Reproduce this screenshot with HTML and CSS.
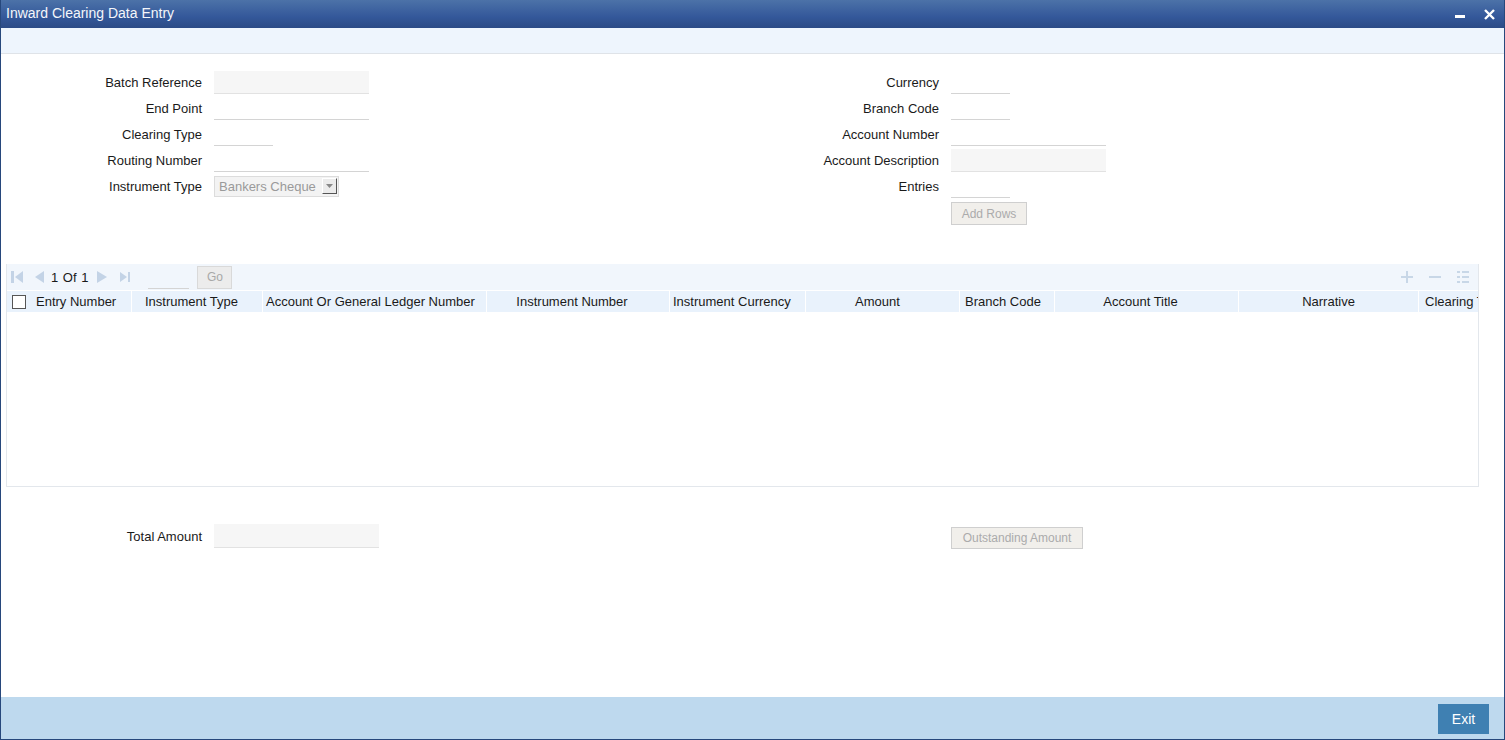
FILE: index.html
```html
<!DOCTYPE html>
<html>
<head>
<meta charset="utf-8">
<link rel="stylesheet" href="styles.css">
</head>
<body>
<div class="window">
  <div class="titlebar">
    <span class="title">Inward Clearing Data Entry</span>
    <div class="winctl">
      <svg class="ic-min" width="12" height="12" viewBox="0 0 12 12"><rect x="1" y="5" width="10" height="3" fill="#fff"/></svg>
      <svg class="ic-close" width="13" height="13" viewBox="0 0 13 13"><path d="M2 2 L11 11 M11 2 L2 11" stroke="#fff" stroke-width="2.4"/></svg>
    </div>
  </div>
  <div class="subbar"></div>
  <div class="content">
    <div class="form">
      <div class="col">
        <div class="row"><label>Batch Reference</label><span class="inp w155 ro"></span></div>
        <div class="row"><label>End Point</label><span class="inp w155"></span></div>
        <div class="row"><label>Clearing Type</label><span class="inp w59"></span></div>
        <div class="row"><label>Routing Number</label><span class="inp w155"></span></div>
        <div class="row"><label>Instrument Type</label>
          <span class="select"><span class="seltext">Bankers Cheque</span><span class="selbtn"><svg width="7" height="4" viewBox="0 0 7 4"><path d="M0 0 H7 L3.5 4 Z" fill="#888"/></svg></span></span>
        </div>
      </div>
      <div class="col">
        <div class="row"><label>Currency</label><span class="inp w59"></span></div>
        <div class="row"><label>Branch Code</label><span class="inp w59"></span></div>
        <div class="row"><label>Account Number</label><span class="inp w155"></span></div>
        <div class="row"><label>Account Description</label><span class="inp w155 ro"></span></div>
        <div class="row"><label>Entries</label><span class="inp w59"></span></div>
        <div class="row btnrow"><label></label><span class="btn addrows">Add Rows</span></div>
      </div>
    </div>

    <div class="grid">
      <div class="toolbar">
        <div class="pager">
          <svg width="13" height="12" viewBox="0 0 13 12"><rect x="0" y="0" width="3" height="12" fill="#c3d3e6"/><path d="M12 0 V12 L4 6 Z" fill="#c3d3e6"/></svg>
          <svg class="prev" width="12" height="12" viewBox="0 0 12 12"><path d="M11 0 V12 L2 6 Z" fill="#c3d3e6"/></svg>
          <span class="pgtext">1 Of 1</span>
          <svg class="next" width="11" height="12" viewBox="0 0 11 12"><path d="M0 0 V12 L10 6 Z" fill="#c3d3e6"/></svg>
          <svg class="last" width="11" height="12" viewBox="0 0 11 12"><path d="M0 1 V11 L7 6 Z" fill="#c3d3e6"/><rect x="8" y="1" width="2" height="10" fill="#c3d3e6"/></svg>
          <span class="pginp"></span>
          <span class="gobtn">Go</span>
        </div>
        <div class="tools">
          <svg width="14" height="14" viewBox="0 0 14 14"><path d="M7 1 V13 M1 7 H13" stroke="#c8d7e7" stroke-width="2"/></svg>
          <svg width="14" height="14" viewBox="0 0 14 14"><path d="M1 7 H13" stroke="#c8d7e7" stroke-width="2"/></svg>
          <svg width="14" height="14" viewBox="0 0 14 14"><g fill="#c8d7e7"><rect x="1" y="1" width="3" height="2"/><rect x="6" y="1" width="7" height="2"/><rect x="1" y="6" width="3" height="2"/><rect x="6" y="6" width="7" height="2"/><rect x="1" y="11" width="3" height="2"/><rect x="6" y="11" width="7" height="2"/></g></svg>
        </div>
      </div>
      <div class="thead">
        <div class="th c1"><span class="chk"></span>Entry Number</div>
        <div class="th c2">Instrument Type</div>
        <div class="th c3">Account Or General Ledger Number</div>
        <div class="th c4">Instrument Number</div>
        <div class="th c5">Instrument Currency</div>
        <div class="th c6">Amount</div>
        <div class="th c7">Branch Code</div>
        <div class="th c8">Account Title</div>
        <div class="th c9">Narrative</div>
        <div class="th c10">Clearing Type</div>
      </div>
      <div class="tbody"></div>
    </div>

    <div class="totals">
      <div class="col">
        <div class="row"><label>Total Amount</label><span class="inp w165 ro tall"></span></div>
      </div>
      <div class="col">
        <div class="row"><label></label><span class="btn outst">Outstanding Amount</span></div>
      </div>
    </div>
  </div>
  <div class="footer">
    <span class="exit">Exit</span>
  </div>
</div>
</body>
</html>
```

FILE: styles.css
```css
html, body {
  margin: 0;
  padding: 0;
  background: #fff;
}
body {
  font-family: "Liberation Sans", Arial, sans-serif;
  font-size: 13px;
  color: #1a1a1a;
}
.window {
  width: 1505px;
  height: 740px;
  box-sizing: border-box;
  border: 1px solid #27487c;
  border-top: none;
  display: flex;
  flex-direction: column;
  overflow: hidden;
}
.titlebar {
  height: 28px;
  flex: none;
  background: linear-gradient(#4c72a8, #34589a 60%, #2b4b86);
  display: flex;
  align-items: center;
  justify-content: space-between;
  padding: 0 8px 0 5px;
  box-sizing: border-box;
}
.title {
  color: #f4f6fa;
  font-size: 14px;
  margin-top: -2px;
}
.winctl {
  display: flex;
  align-items: center;
  gap: 17px;
}
.ic-min { margin-top: 3px; }
.subbar {
  height: 25px;
  flex: none;
  background: #eef5fd;
  border-bottom: 1px solid #dfe3e8;
}
.content {
  flex: 1;
  display: flex;
  flex-direction: column;
}
.form {
  display: flex;
  padding-top: 15px;
}
.col {
  display: flex;
  flex-direction: column;
}
.col:first-child {
  width: 737px;
  flex: none;
}
.row {
  display: flex;
  align-items: center;
  height: 26px;
}
.row label {
  width: 213px;
  flex: none;
  box-sizing: border-box;
  padding-right: 12px;
  text-align: right;
}
.inp {
  display: block;
  height: 22px;
  border-bottom: 1px solid #d4d4d4;
  background: #fff;
}
.inp.ro { background: #f6f6f6; border-bottom-color: #e2e2e2; }
.w155 { width: 155px; }
.w59 { width: 59px; }
.w165 { width: 165px; }
.select {
  display: flex;
  align-items: center;
  width: 125px;
  height: 21px;
  box-sizing: border-box;
  border: 1px solid #dcdcdc;
  background: #f3f3f3;
  color: #9a9a9a;
  padding-left: 4px;
  justify-content: space-between;
}
.seltext { font-size: 13px; }
.selbtn {
  width: 15px;
  height: 16px;
  margin-right: 1px;
  box-sizing: border-box;
  border: 1px solid #fff;
  border-right-color: #555;
  border-bottom-color: #555;
  background: #ebebeb;
  display: flex;
  align-items: center;
  justify-content: center;
}
.btnrow { height: 23px; margin-top: 3px; }
.btn {
  display: flex;
  align-items: center;
  justify-content: center;
  box-sizing: border-box;
  height: 23px;
  border: 1px solid #cfcfcf;
  background: #f1efeb;
  color: #ababab;
  font-size: 12px;
}
.addrows { width: 76px; }
.outst { width: 132px; height: 22px; margin-top: 4px; }

.grid {
  margin: 39px 0 0 5px;
  width: 1473px;
  height: 223px;
  display: flex;
  flex-direction: column;
  border: 1px solid #e3e7ec;
  border-top: none;
  box-sizing: border-box;
}
.toolbar {
  height: 26px;
  background: #f1f6fc;
  display: flex;
  align-items: center;
  justify-content: space-between;
  flex: none;
}
.pager {
  display: flex;
  align-items: center;
  padding-left: 4px;
}
.pager .prev { margin-left: 9px; }
.pgtext { margin-left: 6px; color: #1a1a1a; word-spacing: 1px; }
.pager .next { margin-left: 9px; }
.pager .last { margin-left: 12px; }
.pginp {
  width: 41px;
  height: 20px;
  border-bottom: 1px solid #d4d4d4;
  margin-left: 17px;
  align-self: flex-end;
}
.gobtn {
  width: 35px;
  height: 23px;
  margin-left: 8px;
  box-sizing: border-box;
  border: 1px solid #d9d9d9;
  background: #ececec;
  color: #a8a8a8;
  display: flex;
  align-items: center;
  justify-content: center;
  font-size: 12px;
  align-self: flex-end;
}
.tools {
  display: flex;
  gap: 14px;
  padding-right: 8px;
}
.thead {
  display: flex;
  height: 21px;
  flex: none;
  background: #fff;
  overflow: hidden;
  margin-top: 1px;
}
.th {
  flex: none;
  background: #e9f2fc;
  margin-right: 1px;
  display: flex;
  align-items: center;
  white-space: nowrap;
  box-sizing: border-box;
}
.chk {
  display: inline-block;
  width: 14px;
  height: 14px;
  box-sizing: border-box;
  border: 1px solid #555;
  background: #fff;
  margin: 0 10px 0 5px;
}
.c1 { width: 124px; }
.c2 { width: 130px; padding-left: 13px; }
.c3 { width: 223px; padding-left: 3px; }
.c4 { width: 182px; justify-content: center; padding-right: 12px; }
.c5 { width: 135px; padding-left: 3px; }
.c6 { width: 153px; justify-content: center; padding-right: 10px; }
.c7 { width: 94px; padding-left: 5px; }
.c8 { width: 183px; justify-content: center; padding-right: 12px; }
.c9 { width: 179px; justify-content: center; }
.c10 { width: 120px; padding-left: 6px; }
.tbody {
  flex: 1;
  background: #fff;
}
.totals {
  display: flex;
  margin-top: 36px;
}
.tall { height: 23px; }
.totals .row { height: 26px; }
.footer {
  height: 42px;
  flex: none;
  background: #bed9ee;
  display: flex;
  align-items: center;
  justify-content: flex-end;
  padding-right: 15px;
  margin-top: auto;
}
.exit {
  width: 51px;
  height: 30px;
  background: #3f80b2;
  color: #fff;
  font-size: 14px;
  display: flex;
  align-items: center;
  justify-content: center;
  margin-top: 1px;
}
```
